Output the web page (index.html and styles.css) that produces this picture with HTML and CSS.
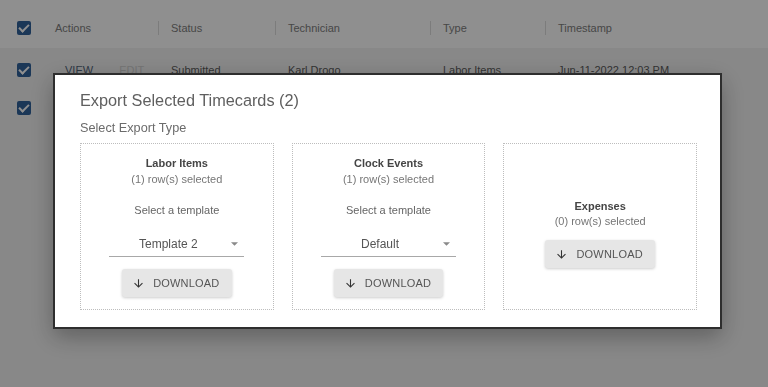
FILE: index.html
```html
<!DOCTYPE html>
<html>
<head>
  <title>Timecards - Export</title>
  <link rel="stylesheet" href="styles.css">
</head>
<body>
  <div class="grid-table">
    <div class="row head">
      <div class="cell check-cell"><span class="checkbox"></span></div>
      <div class="cell">Actions</div>
      <div class="cell"><span class="sep"></span>Status</div>
      <div class="cell"><span class="sep"></span>Technician</div>
      <div class="cell"><span class="sep"></span>Type</div>
      <div class="cell"><span class="sep"></span>Timestamp</div>
    </div>
    <div class="row first">
      <div class="cell check-cell"><span class="checkbox"></span></div>
      <div class="cell actions"><span class="link">VIEW</span><span class="link faded">EDIT</span></div>
      <div class="cell">Submitted</div>
      <div class="cell">Karl Drogo</div>
      <div class="cell">Labor Items</div>
      <div class="cell">Jun-11-2022 12:03 PM</div>
    </div>
    <div class="row">
      <div class="cell check-cell"><span class="checkbox"></span></div>
    </div>
  </div>

  <div class="backdrop">
    <div class="dialog">
      <h2 class="dialog-title">Export Selected Timecards (2)</h2>
      <div class="dialog-sub">Select Export Type</div>
      <div class="boxes">
        <div class="box">
          <div class="box-title">Labor Items</div>
          <div class="box-count">(1) row(s) selected</div>
          <div class="template-label">Select a template</div>
          <div class="select">
            <span class="select-value">Template 2</span>
            <svg class="caret" width="7" height="4" viewBox="0 0 8 4"><path d="M0 0h8L4 4z" fill="#8a8a8a"/></svg>
          </div>
          <button class="download">
            <svg width="13" height="13" viewBox="0 0 24 24"><path d="M20 12l-1.41-1.41L13 16.17V4h-2v12.17l-5.58-5.59L4 12l8 8 8-8z" fill="#333"/></svg>
            DOWNLOAD
          </button>
        </div>
        <div class="box">
          <div class="box-title">Clock Events</div>
          <div class="box-count">(1) row(s) selected</div>
          <div class="template-label">Select a template</div>
          <div class="select">
            <span class="select-value">Default</span>
            <svg class="caret" width="7" height="4" viewBox="0 0 8 4"><path d="M0 0h8L4 4z" fill="#8a8a8a"/></svg>
          </div>
          <button class="download">
            <svg width="13" height="13" viewBox="0 0 24 24"><path d="M20 12l-1.41-1.41L13 16.17V4h-2v12.17l-5.58-5.59L4 12l8 8 8-8z" fill="#333"/></svg>
            DOWNLOAD
          </button>
        </div>
        <div class="box box-expenses">
          <div class="box-title">Expenses</div>
          <div class="box-count">(0) row(s) selected</div>
          <button class="download">
            <svg width="13" height="13" viewBox="0 0 24 24"><path d="M20 12l-1.41-1.41L13 16.17V4h-2v12.17l-5.58-5.59L4 12l8 8 8-8z" fill="#333"/></svg>
            DOWNLOAD
          </button>
        </div>
      </div>
    </div>
  </div>
</body>
</html>
```

FILE: styles.css
```css
body {
  margin: 0;
  font-family: "Liberation Sans", Arial, sans-serif;
  background-color: #f3f3f3;
  color: #5c5c5c;
}

/* table behind the dialog */
.grid-table {
  font-size: 11px;
}

.row {
  display: grid;
  grid-template-columns: 43px 115px 117px 155px 115px 1fr;
  height: 38px;
  align-items: center;
}

.row.head {
  box-sizing: border-box;
  height: 48px;
  padding-top: 8px;
  background-color: #fff;
  color: #808080;
}

.row.first {
  margin-top: 3px;
}

.cell {
  display: flex;
  align-items: center;
  padding-left: 13px;
  white-space: nowrap;
}

.row.head .cell {
  padding-left: 0;
}

.row.head .cell:nth-child(2) {
  padding-left: 12px;
}

.check-cell {
  padding-left: 17px !important;
}

.checkbox {
  width: 14px;
  height: 14px;
  border-radius: 2px;
  background-color: #31629c;
  position: relative;
}

.checkbox::after {
  content: "";
  position: absolute;
  left: 4px;
  top: 1px;
  width: 4px;
  height: 8px;
  border: solid #fff;
  border-width: 0 2px 2px 0;
  transform: rotate(45deg);
}

.sep {
  width: 1px;
  height: 14px;
  background-color: #dedede;
  margin-right: 12px;
}

.actions {
  padding-left: 22px;
}

.link {
  color: #52657a;
  margin-right: 26px;
}

.link.faded {
  color: #d0d0d0;
}

/* dialog */
.backdrop {
  position: fixed;
  inset: 0;
  background-color: rgba(0, 0, 0, 0.44);
  display: flex;
  align-items: flex-start;
  padding: 73px 0 0 53px;
}

.dialog {
  box-sizing: border-box;
  width: 669px;
  background-color: #fff;
  border: 2px solid #2e2e2e;
  padding: 15px 23px 17px 25px;
  box-shadow: 0 8px 22px rgba(0, 0, 0, 0.3);
}

.dialog-title {
  margin: 0;
  font-size: 16.3px;
  line-height: 20px;
  font-weight: normal;
  color: #5f5f5f;
}

.dialog-sub {
  margin-top: 10px;
  font-size: 12.7px;
  line-height: 16px;
  color: #6b6b6b;
}

.boxes {
  margin-top: 7px;
  display: grid;
  grid-template-columns: repeat(3, 1fr);
  gap: 18px;
}

.box {
  box-sizing: border-box;
  height: 167px;
  border: 1px dotted #bdbdbd;
  padding-top: 12px;
  display: flex;
  flex-direction: column;
  align-items: center;
  font-size: 11px;
}

.box-expenses {
  padding-top: 55px;
}

.box-title {
  font-weight: bold;
  line-height: 14px;
  color: #454545;
}

.box-count {
  margin-top: 2px;
  line-height: 14px;
  color: #767676;
}

.box-expenses .box-count {
  margin-top: 1px;
}

.template-label {
  margin-top: 17px;
  line-height: 14px;
  color: #656565;
}

.select {
  margin-top: 10px;
  width: 135px;
  display: flex;
  align-items: center;
  padding: 10px 0 5px;
  border-bottom: 1px solid #a8a8a8;
  font-size: 12px;
  line-height: 14px;
  color: #555;
}

.select-value {
  flex: 1;
  text-align: center;
}

.caret {
  margin: 0 6px 0 4px;
}

.download {
  margin-top: 12px;
  height: 28px;
  display: flex;
  align-items: center;
  gap: 8px;
  padding: 0 12px 0 10px;
  border: none;
  border-radius: 3px;
  background-color: #e6e6e6;
  box-shadow: 0 1px 3px rgba(0, 0, 0, 0.2);
  font-family: "Liberation Sans", Arial, sans-serif;
  font-size: 11px;
  letter-spacing: 0.2px;
  color: #555;
  cursor: pointer;
}
```
